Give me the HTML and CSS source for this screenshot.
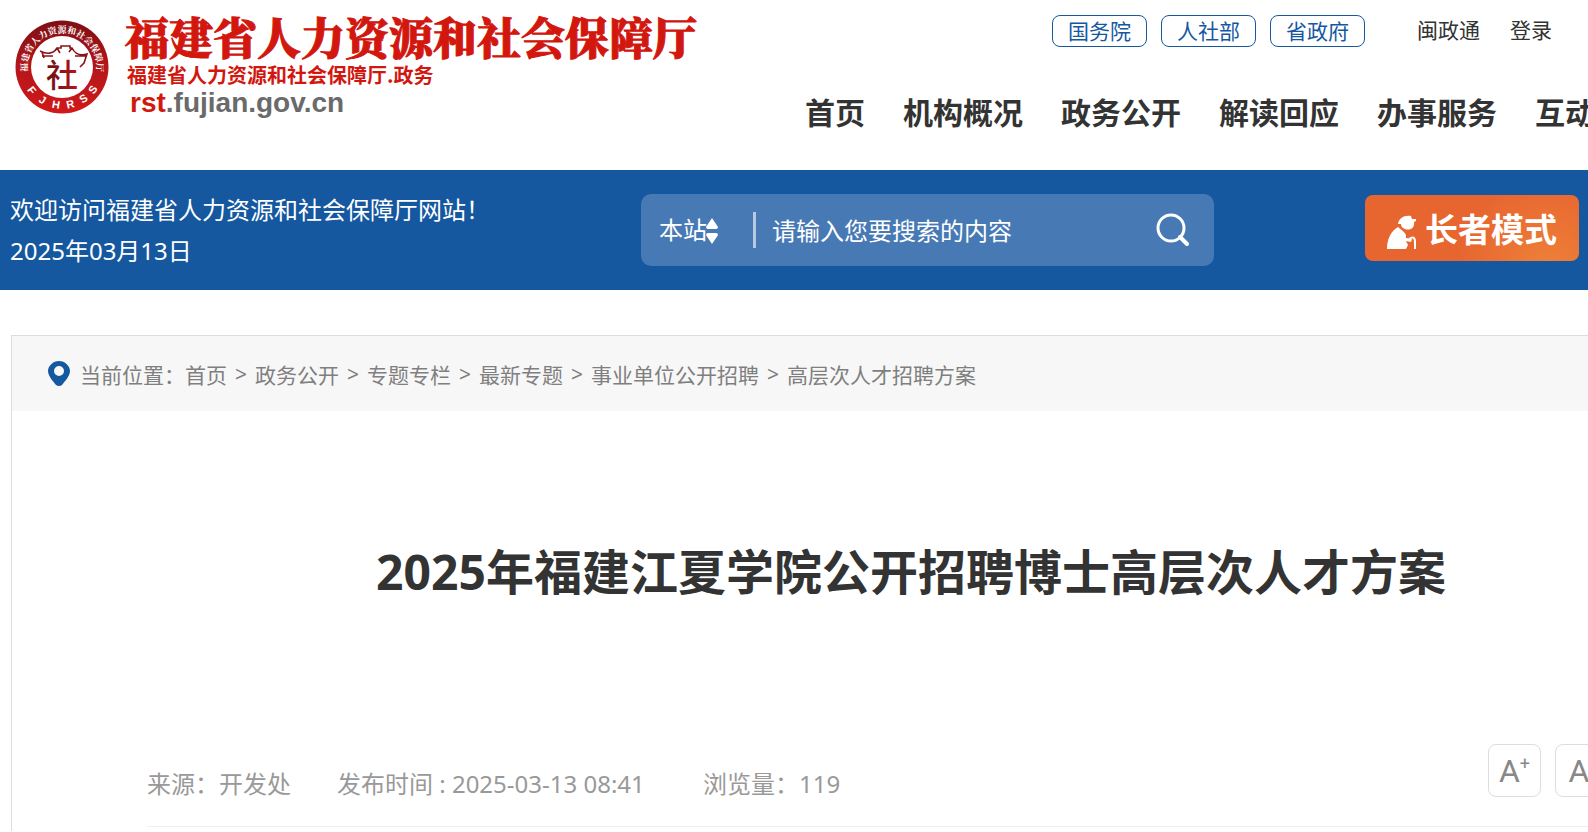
FILE: index.html
```html
<!DOCTYPE html>
<html lang="zh-CN">
<head>
    <meta charset="UTF-8">
    <meta name="viewport" content="width=device-width, initial-scale=1.0">
    <title>2025年福建江夏学院公开招聘博士高层次人才方案</title>
    <link rel="stylesheet" href="styles.css">
</head>
<body>
    <header class="wrap header">
        <a class="logo" href="#">
            <svg class="seal" viewBox="0 0 94 94" width="94" height="94" aria-hidden="true">
                <defs>
                    <linearGradient id="ring" x1="0" y1="0" x2="0" y2="1">
                        <stop offset="0" stop-color="#7d0f14"/>
                        <stop offset="0.5" stop-color="#b5161a"/>
                        <stop offset="1" stop-color="#d0191a"/>
                    </linearGradient>
                    <linearGradient id="inner" x1="0" y1="0" x2="1" y2="0">
                        <stop offset="0" stop-color="#6b1015"/>
                        <stop offset="1" stop-color="#b5161a"/>
                    </linearGradient>
                    <path id="arc-top" d="M12.6 50 A34.5 34.5 0 1 1 81.4 50"/>
                    <path id="arc-bottom" d="M5 47 A42 42 0 0 0 89 47"/>
                </defs>
                <circle cx="47" cy="47" r="46.5" fill="url(#ring)"/>
                <circle cx="47" cy="47" r="31" fill="#fff"/>
                <text class="seal-cn"><textPath href="#arc-top" startOffset="50%">福建省人力资源和社会保障厅</textPath></text>
                <text class="seal-en"><textPath href="#arc-bottom" startOffset="21%">F</textPath></text>
                <text class="seal-en"><textPath href="#arc-bottom" startOffset="33%">J</textPath></text>
                <text class="seal-en"><textPath href="#arc-bottom" startOffset="45%">H</textPath></text>
                <text class="seal-en"><textPath href="#arc-bottom" startOffset="57%">R</textPath></text>
                <text class="seal-en"><textPath href="#arc-bottom" startOffset="69%">S</textPath></text>
                <text class="seal-en"><textPath href="#arc-bottom" startOffset="80%">S</textPath></text>
                <path d="M25 31 C33 35 39 33 42 28 L46 28 V26 H55 V28 L57 28 C60 34 65 36 72 34 L69 43 L65 47 M27 36 H38 M42 28 L45 33 M57 28 L54 32 M27 32 L29 38 M60 36 H71" fill="none" stroke="#8d1217" stroke-width="1.6"/>
                <text class="seal-mark" x="47" y="67">社</text>
            </svg>
            <span class="logo-text">
                <span class="logo-name">福建省人力资源和社会保障厅</span>
                <span class="logo-sub">福建省人力资源和社会保障厅.政务</span>
                <span class="logo-url"><b>rst</b>.fujian.gov.cn</span>
            </span>
        </a>
        <div class="header-right">
            <div class="top-links">
                <a class="pill" href="#">国务院</a>
                <a class="pill" href="#">人社部</a>
                <a class="pill" href="#">省政府</a>
                <a class="user-link first" href="#">闽政通</a>
                <a class="user-link" href="#">登录</a>
            </div>
            <nav class="nav">
                <a href="#">首页</a>
                <a href="#">机构概况</a>
                <a href="#">政务公开</a>
                <a href="#">解读回应</a>
                <a href="#">办事服务</a>
                <a href="#">互动交流</a>
            </nav>
        </div>
    </header>

    <div class="banner">
        <div class="wrap banner-inner">
            <div class="welcome">
                <p>欢迎访问福建省人力资源和社会保障厅网站！</p>
                <p>2025年03月13日</p>
            </div>
            <form class="search">
                <div class="scope">
                    <select name="scope" aria-label="搜索范围">
                        <option>本站</option>
                    </select>
                    <svg class="scope-arrows" viewBox="0 0 12 26" width="12" height="26" aria-hidden="true">
                        <path d="M6 0 L12 9 Q12 11 10 11 H2 Q0 11 0 9 Z M6 26 L0 17 Q0 15 2 15 H10 Q12 15 12 17 Z" fill="#fff"/>
                    </svg>
                </div>
                <input type="text" name="keyword" placeholder="请输入您要搜索的内容" aria-label="搜索内容">
                <button class="search-btn" type="button" aria-label="搜索">
                    <svg viewBox="0 0 34 34" width="34" height="34">
                        <circle cx="15" cy="15" r="13" fill="none" stroke="#fff" stroke-width="3"/>
                        <path d="M24 24 L31 31" stroke="#fff" stroke-width="4" stroke-linecap="round"/>
                    </svg>
                </button>
            </form>
            <button class="elder" type="button">
                <svg viewBox="0 0 30 34" width="30" height="34" aria-hidden="true">
                    <path d="M11 9 C12 3 17 0 24 1 L25 4 L29 4 L29 6 L27 7 C28 13 23 16 18 14 C15 13 14 11 14 9 Z" fill="#fff"/>
                    <path d="M0 34 C0 24 4 16 11 12 C14 15 18 17 19 20 L19 23 L25 24 L24 27 L19 26 L21 30 L19 34 Z" fill="#fff"/>
                    <path d="M22 24 Q28 20 28 27 V34" fill="none" stroke="#fff" stroke-width="2"/>
                </svg>
                长者模式
            </button>
        </div>
    </div>

    <main class="wrap article">
        <div class="breadcrumb">
            <svg viewBox="0 0 22 25" width="22" height="25" aria-hidden="true">
                <path d="M11 0 C17 0 22 5 22 10 C22 15 17 20 14 24 Q11 26 8 24 C5 20 0 15 0 10 C0 5 5 0 11 0 Z M11 5 A5 5 0 1 0 11 15 A5 5 0 1 0 11 5 Z" fill="#15589f"/>
            </svg>
            <span>当前位置：</span>
            <a href="#">首页</a><i>&gt;</i>
            <a href="#">政务公开</a><i>&gt;</i>
            <a href="#">专题专栏</a><i>&gt;</i>
            <a href="#">最新专题</a><i>&gt;</i>
            <a href="#">事业单位公开招聘</a><i>&gt;</i>
            <a href="#">高层次人才招聘方案</a>
        </div>
        <h1>2025年福建江夏学院公开招聘博士高层次人才方案</h1>
        <div class="meta">
            <span>来源：开发处</span>
            <span class="date">发布时间 : 2025-03-13 08:41</span>
            <span>浏览量：119</span>
            <div class="font-size">
                <button type="button">A<sup>+</sup></button>
                <button type="button">A<sup>-</sup></button>
            </div>
        </div>
    </main>
</body>
</html>
```
FILE: styles.css
```css
* {
    box-sizing: border-box;
}

body {
    margin: 0;
    overflow-x: hidden;
    background: #fff;
    color: #333;
    font-family: "Noto Sans", "Noto Sans CJK SC", sans-serif;
    font-size: 24px;
}

a {
    color: inherit;
    text-decoration: none;
}

p, h1 {
    margin: 0;
}

button, input, select {
    border: 0;
    padding: 0;
    background: none;
    color: inherit;
    font: inherit;
}

svg {
    display: block;
    flex: none;
}

/* fixed desktop width of the site */
.wrap {
    width: 1800px;
    margin-left: 10px;
}

/* header */
.header {
    display: flex;
    height: 170px;
}

.logo {
    display: flex;
    flex: none;
    width: 795px;
    padding-left: 5px;
}

.seal {
    margin-top: 20px;
}

.seal text {
    fill: #fff;
    text-anchor: middle;
}

.seal .seal-cn {
    font: bold 9px "Noto Serif CJK SC", "Noto Sans CJK SC", serif;
}

.seal .seal-en {
    font: bold 11px "Liberation Sans", sans-serif;
}

.seal .seal-mark {
    fill: url(#inner);
    font: 500 32px "Noto Sans CJK SC", sans-serif;
}

.logo-text {
    display: flex;
    flex-direction: column;
    padding: 11px 0 0 16px;
    color: #d2170f;
    white-space: nowrap;
}

.logo-name {
    font: 900 44px/50px "Noto Serif CJK SC", "Noto Sans CJK SC", serif;
    -webkit-text-stroke: 1px #d2170f;
}

.logo-sub {
    padding-left: 2px;
    font: bold 20px/28px "Noto Sans CJK SC", sans-serif;
}

.logo-url {
    padding-left: 5px;
    color: #6a6a6a;
    font: bold 28px/28px "Liberation Sans", sans-serif;
}

.logo-url b {
    color: #d2170f;
}

.top-links {
    display: flex;
    gap: 14px;
    padding: 15px 0 0 247px;
    font-size: 21px;
    line-height: 30px;
}

.pill {
    width: 95px;
    border: 1px solid #15589f;
    border-radius: 8px;
    color: #15589f;
    text-align: center;
}

.user-link {
    margin-left: 16px;
}

.user-link.first {
    margin-left: 38px;
}

.nav {
    display: flex;
    gap: 38px;
    padding-top: 44px;
    font-size: 30px;
    font-weight: bold;
    line-height: 44px;
    white-space: nowrap;
}

/* blue bar */
.banner {
    background: #15589f;
    color: #fff;
}

.banner-inner {
    display: flex;
    align-items: center;
    height: 120px;
}

.welcome {
    width: 631px;
    line-height: 41px;
}

.search {
    display: flex;
    align-items: center;
    width: 573px;
    height: 72px;
    border-radius: 10px;
    background: #477ab4;
}

.scope {
    position: relative;
    width: 115px;
    height: 36px;
    padding-left: 18px;
    border-right: 3px solid #b5cae1;
}

.scope select {
    width: 80px;
    height: 36px;
    appearance: none;
    line-height: 36px;
}

.scope-arrows {
    position: absolute;
    left: 65px;
    top: 6px;
}

.search input {
    flex: 1;
    min-width: 0;
    height: 40px;
    padding-left: 16px;
    outline: none;
}

.search input::placeholder {
    color: #fff;
    opacity: 1;
}

.search-btn {
    margin-right: 24px;
    cursor: pointer;
}

.elder {
    display: flex;
    align-items: center;
    gap: 8px;
    width: 214px;
    height: 66px;
    margin: 0 0 4px 151px;
    padding-left: 22px;
    border-radius: 8px;
    background: radial-gradient(circle at 85% 110%, #ee8038, #e76630 45%);
    font-size: 33px;
    font-weight: bold;
    white-space: nowrap;
    cursor: pointer;
}

.elder svg {
    margin-top: 8px;
}

/* article */
.article {
    margin-top: 45px;
    margin-left: 11px;
    padding-bottom: 4px;
    border: 1px solid #ddd;
    border-bottom: 0;
}

.breadcrumb {
    display: flex;
    align-items: center;
    height: 75px;
    padding-left: 36px;
    background: #f7f7f7;
    color: #7f7f7f;
    font-size: 21px;
}

.breadcrumb svg {
    margin-right: 10px;
}

.breadcrumb i {
    margin: 0 8px;
    font-style: normal;
}

h1 {
    padding: 125px 0 138px;
    font-size: 48px;
    line-height: 72px;
    text-align: center;
}

.meta {
    display: flex;
    gap: 46px;
    height: 81px;
    margin: 0 135px;
    padding-top: 20px;
    border-bottom: 1px solid #eee;
    color: #999;
    line-height: 36px;
    white-space: nowrap;
}

.meta .date {
    width: 320px;
}

.font-size {
    display: flex;
    gap: 14px;
    margin: -22px 67px 0 auto;
}

.font-size button {
    width: 53px;
    height: 53px;
    border: 1px solid #ddd;
    border-radius: 8px;
    color: #888;
    font: 32px/50px Roboto, sans-serif;
    cursor: pointer;
}

.font-size sup {
    font-size: 18px;
    line-height: 0;
}
```
